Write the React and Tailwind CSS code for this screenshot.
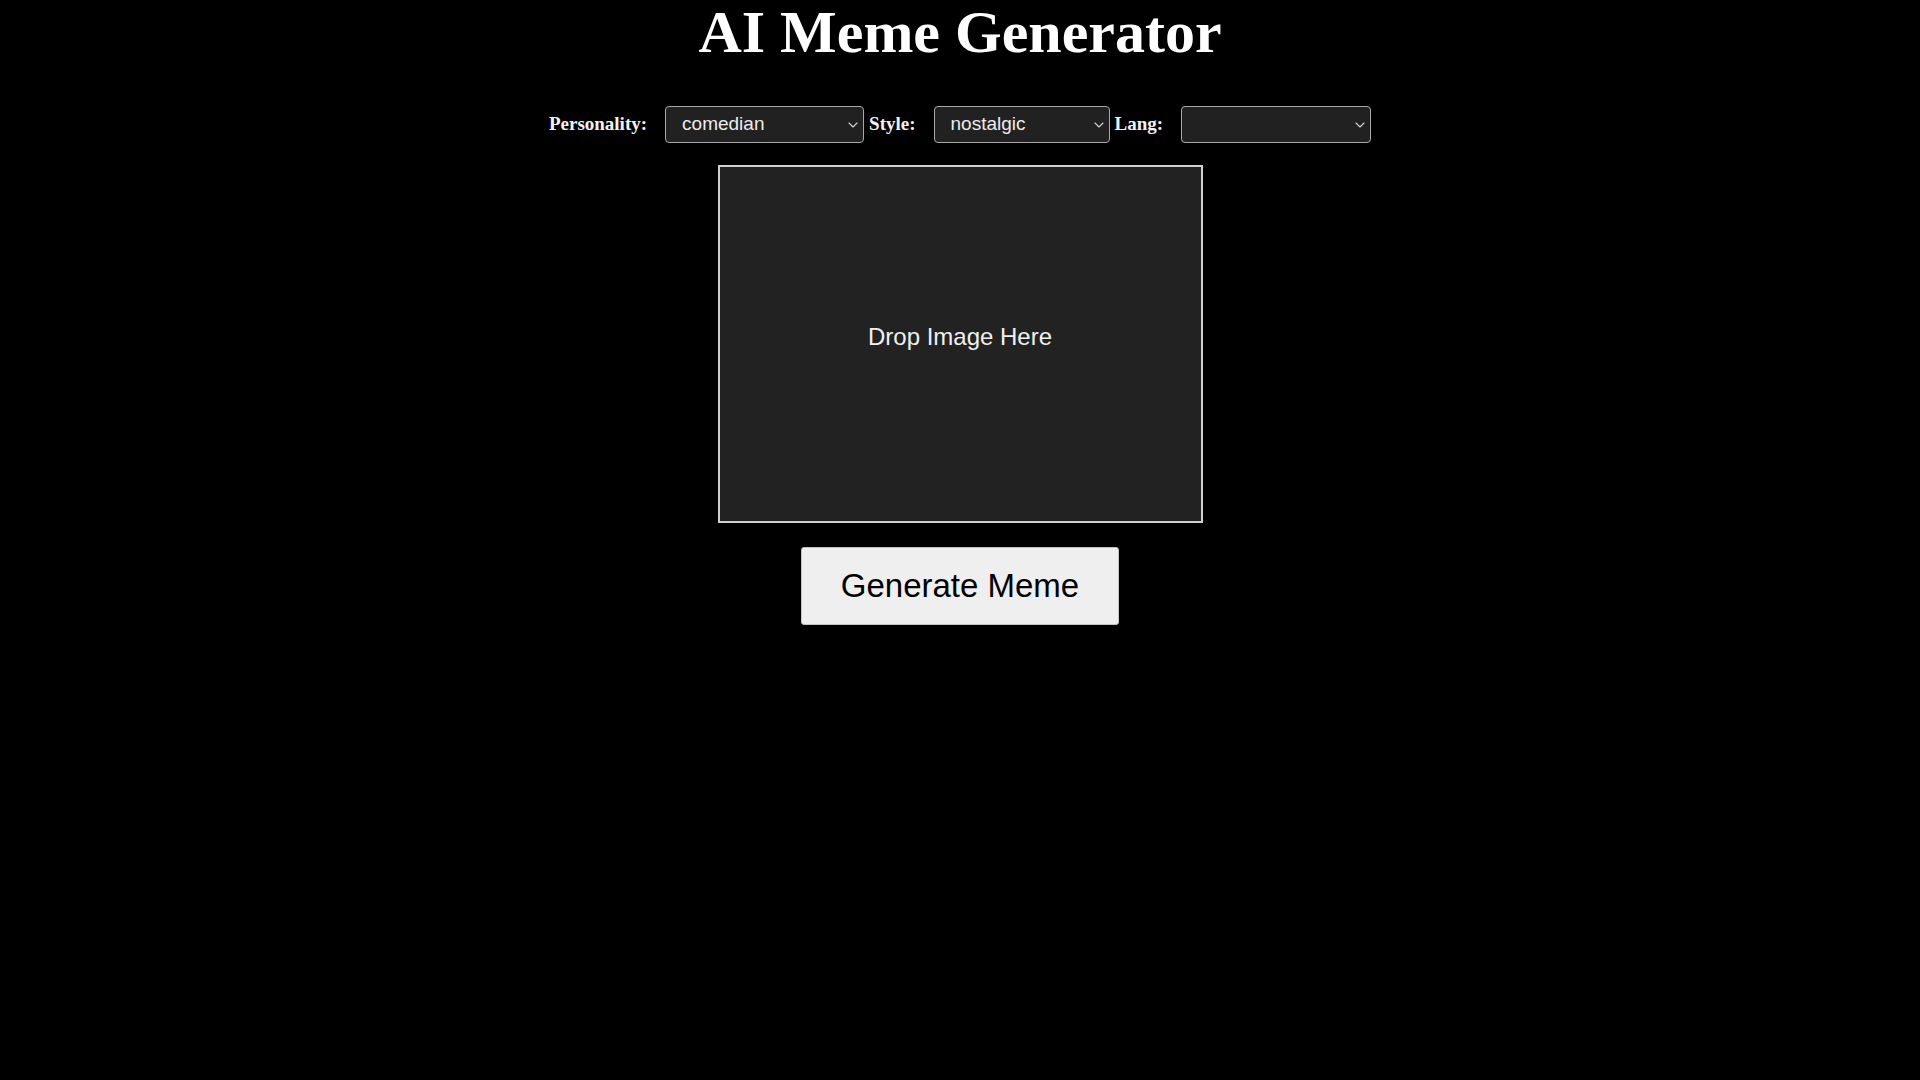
import React, { useState } from 'react';

const serif = "font-['Liberation_Serif','Times_New_Roman',serif]";
const sans = "font-['Liberation_Sans',Arial,sans-serif]";

const Chevron = () => (
  <svg
    className="pointer-events-none absolute right-[6px] top-1/2 -translate-y-1/2"
    width="10"
    height="6"
    viewBox="0 0 10 6"
    fill="none"
  >
    <path d="M1 1l4 4 4-4" stroke="#d0d0d0" strokeWidth="1.1" strokeLinecap="round" strokeLinejoin="round" />
  </svg>
);

const Picker = ({ label, value, onChange, options, width }) => (
  <>
    <label className={`${serif} mr-[18px] text-[19px] font-bold text-[#f2f2f2]`}>{label}</label>
    <div className={`relative ${width}`}>
      <select
        value={value}
        onChange={(e) => onChange(e.target.value)}
        className={`${sans} h-[37px] w-full appearance-none rounded-[4px] border border-[#a8a8a8] bg-[#212121] pl-[16px] pr-6 text-[19px] text-[#ececec] outline-none`}
      >
        {options.map((o) => (
          <option key={o} value={o}>{o}</option>
        ))}
      </select>
      <Chevron />
    </div>
  </>
);

const App = () => {
  const [personality, setPersonality] = useState('comedian');
  const [style, setStyle] = useState('nostalgic');
  const [lang, setLang] = useState('');

  return (
    <div className="flex min-h-screen flex-col items-center bg-black">
      <h1 className={`${serif} text-[60px] font-bold leading-[65px] text-white`}>AI Meme Generator</h1>

      <div className="mt-[41px] flex items-center gap-[5px]">
        <div className="flex items-center">
          <Picker label="Personality:" value={personality} onChange={setPersonality} options={['comedian', 'sarcastic', 'wholesome', 'philosopher']} width="w-[199px]" />
        </div>
        <div className="flex items-center">
          <Picker label="Style:" value={style} onChange={setStyle} options={['nostalgic', 'modern', 'dark', 'absurd']} width="w-[176px]" />
        </div>
        <div className="flex items-center">
          <Picker label="Lang:" value={lang} onChange={setLang} options={['', 'English', 'Español', 'Français']} width="w-[190px]" />
        </div>
      </div>

      <div className="mt-[22px] flex h-[358px] w-[485px] items-center justify-center border-2 border-[#d0d0d0] bg-[#222222] pb-[14px]">
        <span className={`${sans} text-[24px] text-[#f0f0f0]`}>Drop Image Here</span>
      </div>

      <button
        className={`${sans} mt-[24px] flex h-[78px] w-[318px] items-center justify-center rounded-[3px] border border-[#c4c4c4] bg-[#efefef] text-[33px] text-black`}
      >
        Generate Meme
      </button>
    </div>
  );
};

export default App;
